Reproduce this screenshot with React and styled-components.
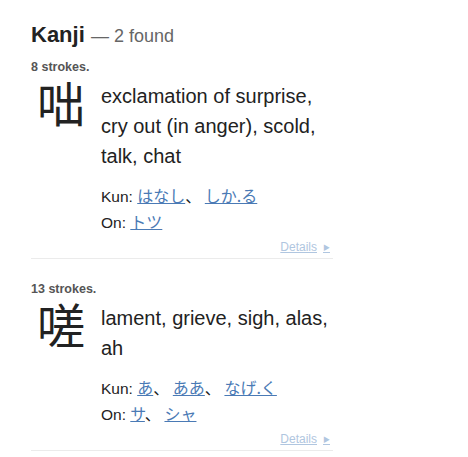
import React from "react";
import styled, { createGlobalStyle } from "styled-components";

const GlobalStyle = createGlobalStyle`
  body {
    margin: 0;
    background: #fff;
    font-family: "Liberation Sans", Arial, "Noto Sans CJK JP", sans-serif;
    color: #222;
  }
`;

const Page = styled.div`
  padding: 21px 0 0 31px;
  width: 302px;
`;

const Title = styled.h2`
  margin: 0 0 10px;
  font-size: 22px;
  font-weight: bold;
  color: #222;
  line-height: 28px;
`;

const Found = styled.span`
  font-size: 18px;
  font-weight: normal;
  color: #666;
`;

const Entry = styled.div`
  border-bottom: 1px solid #ebebeb;
  padding-bottom: 3px;
  margin-bottom: 23px;
`;

const Strokes = styled.div`
  font-size: 12.5px;
  font-weight: bold;
  color: #555;
  line-height: 15px;
`;

const Row = styled.div`
  display: flex;
  align-items: flex-start;
`;

const Glyph = styled.div`
  width: 70px;
  flex: none;
  font-family: "Noto Sans CJK JP", sans-serif;
  font-size: 48px;
  line-height: 52px;
  padding-left: 6px;
  box-sizing: border-box;
  color: #222;
`;

const Info = styled.div`
  flex: 1;
  padding-top: 6px;
`;

const Meanings = styled.div`
  font-size: 20px;
  line-height: 30px;
  color: #222;
`;

const Readings = styled.div`
  margin-top: 12px;
  font-size: 15.5px;
  line-height: 25px;
  color: #222;
`;

const Reading = styled.a`
  color: #4a7ab5;
  text-decoration: underline;
  font-family: "Noto Sans CJK JP", sans-serif;
  font-size: 16px;
  cursor: pointer;
`;

const Sep = styled.span`
  font-family: "Noto Sans CJK JP", sans-serif;
  font-size: 16px;
`;

const DetailsRow = styled.div`
  text-align: right;
  font-size: 12px;
  line-height: 14px;
  margin-top: 5px;
`;

const DetailsLink = styled.a`
  color: #b0c6e0;
  text-decoration: underline;
  padding-right: 3px;
`;

const Arrow = styled.span`
  font-size: 7px;
  margin-left: 6px;
  vertical-align: 1px;
`;

const kanji = [
  {
    char: "咄",
    strokes: 8,
    meanings: "exclamation of surprise, cry out (in anger), scold, talk, chat",
    kun: ["はなし", "しか.る"],
    on: ["トツ"],
  },
  {
    char: "嗟",
    strokes: 13,
    meanings: "lament, grieve, sigh, alas, ah",
    kun: ["あ", "ああ", "なげ.く"],
    on: ["サ", "シャ"],
  },
];

const ReadingList = ({ items }) =>
  items.map((r, i) => (
    <React.Fragment key={r}>
      <Reading>{r}</Reading>
      {i < items.length - 1 && <Sep>、 </Sep>}
    </React.Fragment>
  ));

export default function App() {
  return (
    <>
      <GlobalStyle />
      <Page>
        <Title>
          Kanji <Found>— {kanji.length} found</Found>
        </Title>
        {kanji.map((k) => (
          <Entry key={k.char}>
            <Strokes>{k.strokes} strokes.</Strokes>
            <Row>
              <Glyph>{k.char}</Glyph>
              <Info>
                <Meanings>{k.meanings}</Meanings>
                <Readings>
                  <div>
                    Kun: <ReadingList items={k.kun} />
                  </div>
                  <div>
                    On: <ReadingList items={k.on} />
                  </div>
                </Readings>
              </Info>
            </Row>
            <DetailsRow>
              <DetailsLink>
                Details<Arrow>▶</Arrow>
              </DetailsLink>
            </DetailsRow>
          </Entry>
        ))}
      </Page>
    </>
  );
}
